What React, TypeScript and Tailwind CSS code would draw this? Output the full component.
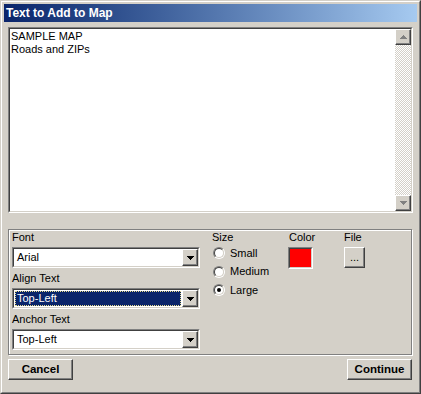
import React from "react";

function Arrow({ dir, color = "#000" }: { dir: "up" | "down"; color?: string }) {
  return (
    <svg width="7" height="4" viewBox="0 0 7 4" className="block">
      {dir === "down" ? (
        <path d="M0 0h7L3.5 4z" fill={color} shapeRendering="crispEdges" />
      ) : (
        <path d="M0 4h7L3.5 0z" fill={color} shapeRendering="crispEdges" />
      )}
    </svg>
  );
}

function Raised({ className = "", children }: { className?: string; children?: React.ReactNode }) {
  return (
    <div className={`border border-t-white border-l-white border-b-[#404040] border-r-[#404040] bg-[#d4d0c8] shadow-[inset_-1px_-1px_0_#808080] ${className}`}>
      {children}
    </div>
  );
}

function Combo({ value, selected = false }: { value: string; selected?: boolean }) {
  return (
    <div className="h-[21px] w-[188px] border border-t-[#808080] border-l-[#808080] border-b-white border-r-white">
      <div className="flex h-full border border-t-[#404040] border-l-[#404040] border-b-[#d4d0c8] border-r-[#d4d0c8] bg-white">
        <div className="flex-1 p-px">
          {selected ? (
            <div className="h-full border border-dotted border-[#e8dc8c] bg-[#0a246a] pl-px text-white leading-[13px]">
              {value}
            </div>
          ) : (
            <div className="pl-[2px] leading-[15px]">{value}</div>
          )}
        </div>
        <Raised className="flex h-[17px] w-[16px] items-center justify-center">
          <Arrow dir="down" />
        </Raised>
      </div>
    </div>
  );
}

function Radio({ label, checked = false }: { label: string; checked?: boolean }) {
  return (
    <div className="flex h-[12px] items-center gap-[5px]">
      <div className="h-[12px] w-[12px] rounded-full border border-t-[#808080] border-l-[#808080] border-b-white border-r-white">
        <div className="flex h-full w-full items-center justify-center rounded-full border border-t-[#404040] border-l-[#404040] border-b-[#d4d0c8] border-r-[#d4d0c8] bg-white">
          {checked && <div className="h-[4px] w-[4px] rounded-full bg-black" />}
        </div>
      </div>
      <span className="leading-[13px]">{label}</span>
    </div>
  );
}

export default function App() {
  return (
    <div className="h-[394px] w-[421px] border border-t-[#d4d0c8] border-l-[#d4d0c8] border-b-[#404040] border-r-[#404040] bg-[#d4d0c8] font-['Liberation_Sans',Arial,sans-serif] text-[11px] text-black">
      <div className="h-full border border-t-white border-l-white border-b-[#808080] border-r-[#808080] p-[2px]">
        {/* Title bar */}
        <div className="flex h-[18px] items-center bg-gradient-to-r from-[#0a246a] to-[#a6caf0] pl-[2px] text-[12px] font-bold text-white">
          Text to Add to Map
        </div>

        <div className="px-[4px] pt-[5px]">
          {/* Text area */}
          <div className="h-[186px] border border-t-[#808080] border-l-[#808080] border-b-white border-r-white">
            <div className="flex h-full border border-t-[#404040] border-l-[#404040] border-b-[#d4d0c8] border-r-[#d4d0c8] bg-white">
              <div className="flex-1 pl-px pt-px leading-[13px]">
                <div>SAMPLE MAP</div>
                <div>Roads and ZIPs</div>
              </div>
              <div className="flex w-[16px] flex-col">
                <Raised className="flex h-[16px] items-center justify-center">
                  <Arrow dir="up" color="#808080" />
                </Raised>
                <div className="flex-1 bg-[repeating-conic-gradient(#d4d0c8_0_25%,#ffffff_0_50%)] bg-[length:2px_2px]" />
                <Raised className="flex h-[16px] items-center justify-center">
                  <Arrow dir="down" color="#808080" />
                </Raised>
              </div>
            </div>
          </div>

          {/* Group box */}
          <div className="mt-[16px] flex h-[126px] w-[404px] border border-[#808080] pl-[3px] pt-px shadow-[inset_1px_1px_0_#fff,1px_1px_0_#fff]">
            <div className="flex w-[188px] flex-col">
              <div className="leading-[13px]">Font</div>
              <div className="mt-[3px]">
                <Combo value="Arial" />
              </div>
              <div className="mt-[4px] leading-[13px]">Align Text</div>
              <div className="mt-[3px]">
                <Combo value="Top-Left" selected />
              </div>
              <div className="mt-[4px] leading-[13px]">Anchor Text</div>
              <div className="mt-[3px]">
                <Combo value="Top-Left" />
              </div>
            </div>

            <div className="ml-[12px] flex w-[76px] flex-col">
              <div className="leading-[13px]">Size</div>
              <div className="ml-px mt-[3px] flex flex-col gap-[6.5px]">
                <Radio label="Small" />
                <Radio label="Medium" />
                <Radio label="Large" checked />
              </div>
            </div>

            <div className="flex w-[56px] flex-col">
              <div className="pl-px leading-[13px]">Color</div>
              <div className="mt-[3px] h-[22px] w-[25px] border border-t-[#808080] border-l-[#808080] border-b-white border-r-white">
                <div className="h-full border border-t-[#404040] border-l-[#404040] border-b-[#d4d0c8] border-r-[#d4d0c8] bg-[#ff0000]" />
              </div>
            </div>

            <div className="flex flex-col">
              <div className="leading-[13px]">File</div>
              <Raised className="mt-[3px] flex h-[21px] w-[21px] items-center justify-center leading-none">
                ...
              </Raised>
            </div>
          </div>

          {/* Buttons */}
          <div className="mt-[4px] flex justify-between">
            <Raised className="flex h-[21px] w-[65px] items-center justify-center text-[11.5px] font-bold">
              Cancel
            </Raised>
            <Raised className="mr-px flex h-[21px] w-[65px] items-center justify-center text-[11.5px] font-bold">
              Continue
            </Raised>
          </div>
        </div>
      </div>
    </div>
  );
}
